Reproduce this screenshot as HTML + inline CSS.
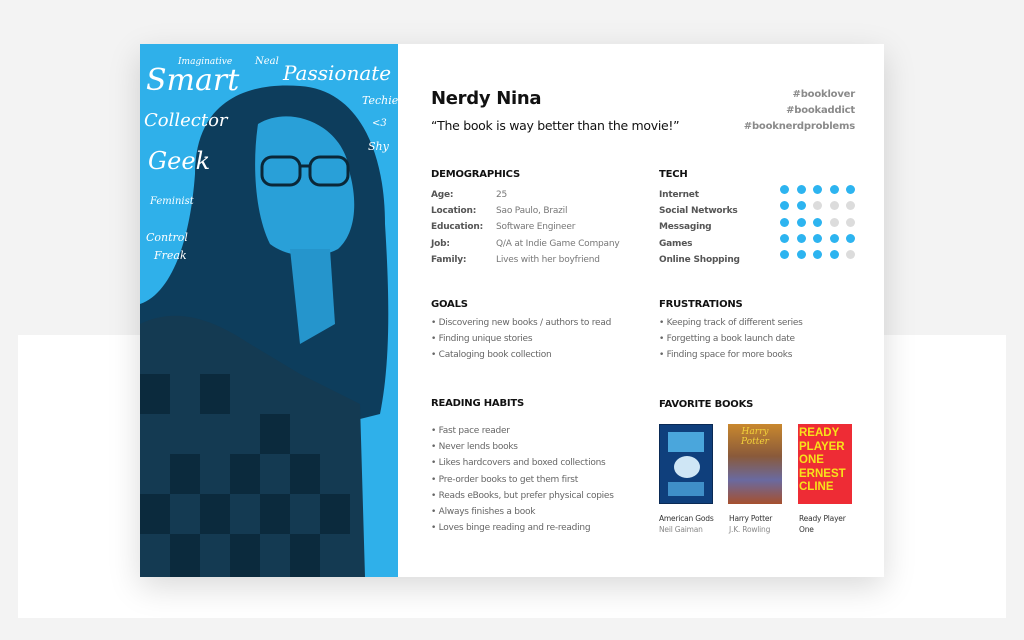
<!DOCTYPE html>
<html><head><meta charset="utf-8"><style>
*{margin:0;padding:0;box-sizing:border-box}
body{width:1024px;height:640px;background:#f3f3f3;position:relative;overflow:hidden;font-family:"DejaVu Sans","Liberation Sans",sans-serif;color:#222}
.band{position:absolute;left:18px;top:335px;width:988px;height:283px;background:#fff}
.card{position:absolute;left:140px;top:44px;width:744px;height:533px;background:#fff;box-shadow:0 10px 30px rgba(0,0,0,.15)}
.photo{position:absolute;left:0;top:0;width:258px;height:533px;background:#2fb0ea;overflow:hidden}
.a{position:absolute;white-space:nowrap}
h1{position:absolute;left:291px;top:44px;font-size:18px;font-weight:bold;color:#111;letter-spacing:-.3px}
.q{left:291px;top:74px;font-size:12.5px;color:#111;letter-spacing:-.3px}
.tags{position:absolute;right:29px;top:43px;text-align:right;font-size:10px;font-weight:bold;color:#8a8a8a;line-height:16px;letter-spacing:-.2px}
.h{font-size:10px;font-weight:bold;color:#111;letter-spacing:-.2px}
.k{font-size:9px;font-weight:bold;color:#555;letter-spacing:-.2px}
.v{font-size:9px;color:#777;letter-spacing:-.2px}
.li{font-size:9px;color:#666;line-height:16.2px;letter-spacing:-.25px}
.dot{position:absolute;width:9px;height:9px;border-radius:50%}
.b{background:#2db4f0}.g{background:#dcdcdc}
.bk{position:absolute;width:54px;height:80px;top:380px}
.cap{font-size:7.5px;color:#333;line-height:11px;letter-spacing:-.2px}
.cap span{color:#888}
</style></head><body>
<div class="band"></div>
<div class="card">
<div class="photo">
<svg width="258" height="533" viewBox="0 0 258 533">
<path d="M55 130 C55 55 110 38 160 42 C220 46 245 110 245 180 C250 260 250 320 240 370 L200 380 L150 330 L90 330 L0 300 L0 260 C30 250 50 200 55 130 Z" fill="#0d3d5c"/>
<path d="M0 280 C40 260 80 280 110 300 L160 330 L220 360 L225 533 L0 533 Z" fill="#143a52"/>
<g fill="#0a2738" opacity=".8">
<rect x="0" y="330" width="30" height="40"/><rect x="60" y="330" width="30" height="40"/><rect x="120" y="370" width="30" height="40"/>
<rect x="30" y="410" width="30" height="40"/><rect x="90" y="410" width="30" height="40"/><rect x="150" y="410" width="30" height="40"/>
<rect x="0" y="450" width="30" height="40"/><rect x="60" y="450" width="30" height="40"/><rect x="120" y="450" width="30" height="40"/><rect x="180" y="450" width="30" height="40"/>
<rect x="30" y="490" width="30" height="43"/><rect x="90" y="490" width="30" height="43"/><rect x="150" y="490" width="30" height="43"/>
</g>
<path d="M118 80 C150 60 205 80 210 130 C218 160 215 190 198 205 C180 215 150 215 130 200 C115 170 112 120 118 80 Z" fill="#29a0d8"/>
<path d="M150 205 L190 205 L195 280 L160 300 Z" fill="#2595cc"/>
<g fill="none" stroke="#0a2738" stroke-width="3"><rect x="122" y="113" width="38" height="28" rx="10"/><rect x="170" y="113" width="38" height="28" rx="10"/><path d="M160 122 L170 122"/></g>
<g fill="#fff" font-family="'DejaVu Serif',serif" font-style="italic">
<text x="6" y="46" font-size="30">Smart</text>
<text x="38" y="20" font-size="9">Imaginative</text>
<text x="115" y="20" font-size="10">Neal</text>
<text x="143" y="36" font-size="20">Passionate</text>
<text x="222" y="60" font-size="11">Techie</text>
<text x="232" y="82" font-size="10">&lt;3</text>
<text x="228" y="106" font-size="11">Shy</text>
<text x="4" y="82" font-size="18">Collector</text>
<text x="8" y="125" font-size="24">Geek</text>
<text x="10" y="160" font-size="10">Feminist</text>
<text x="6" y="197" font-size="11">Control</text>
<text x="14" y="215" font-size="11">Freak</text>
</g>
</svg>
</div>
<h1>Nerdy Nina</h1>
<div class="a q">“The book is way better than the movie!”</div>
<div class="tags">#booklover<br>#bookaddict<br>#booknerdproblems</div>

<div class="a h" style="left:291px;top:125px">DEMOGRAPHICS</div>
<div class="a k" style="left:291px;top:143px;line-height:16.2px">Age:<br>Location:<br>Education:<br>Job:<br>Family:</div>
<div class="a v" style="left:356px;top:143px;line-height:16.2px">25<br>Sao Paulo, Brazil<br>Software Engineer<br>Q/A at Indie Game Company<br>Lives with her boyfriend</div>

<div class="a h" style="left:519px;top:125px">TECH</div>
<div class="a k" style="left:519px;top:143px;line-height:16.2px">Internet<br>Social Networks<br>Messaging<br>Games<br>Online Shopping</div>
<div id="dots"></div>

<div class="a h" style="left:291px;top:255px">GOALS</div>
<div class="a li" style="left:291px;top:271px">• Discovering new books / authors to read<br>• Finding unique stories<br>• Cataloging book collection</div>
<div class="a h" style="left:519px;top:255px">FRUSTRATIONS</div>
<div class="a li" style="left:519px;top:271px">• Keeping track of different series<br>• Forgetting a book launch date<br>• Finding space for more books</div>

<div class="a h" style="left:291px;top:354px">READING HABITS</div>
<div class="a li" style="left:291px;top:379px">• Fast pace reader<br>• Never lends books<br>• Likes hardcovers and boxed collections<br>• Pre-order books to get them first<br>• Reads eBooks, but prefer physical copies<br>• Always finishes a book<br>• Loves binge reading and re-reading</div>
<div class="a h" style="left:519px;top:355px">FAVORITE BOOKS</div>

<div class="bk" style="left:519px;background:#0f3f7c;border:1px solid #0a2a55"><div style="margin:7px 8px 0;height:20px;background:#4aa6dc"></div><div style="margin:4px 14px;width:26px;height:22px;border-radius:50%;background:#cfe6f5"></div><div style="margin:2px 8px;height:14px;background:#3f8fc8"></div></div>
<div class="bk" style="left:588px;background:linear-gradient(#c9882e,#8a5a3a 40%,#6a6aa0 70%,#a6502e)"><div style="color:#f3d23b;font-size:9px;font-style:italic;text-align:center;margin-top:3px;font-family:'DejaVu Serif',serif">Harry Potter</div></div>
<div class="bk" style="left:658px;background:#ee2c35;color:#f7e21b;font-weight:bold;font-size:11.5px;line-height:13.5px;padding:3px 1px;font-family:'Liberation Sans',sans-serif;overflow:hidden">READY<br>PLAYER<br>ONE<br>ERNEST<br>CLINE</div>

<div class="a cap" style="left:519px;top:469px">American Gods<br><span>Neil Gaiman</span></div>
<div class="a cap" style="left:589px;top:469px">Harry Potter<br><span>J.K. Rowling</span></div>
<div class="a cap" style="left:659px;top:469px">Ready Player<br>One</div>
</div>
<script>
var d=[5,2,3,5,4],h='';
for(var r=0;r<5;r++)for(var c=0;c<5;c++)h+='<div class="dot '+(c<d[r]?'b':'g')+'" style="left:'+(640+c*16.5)+'px;top:'+(141+r*16.3)+'px"></div>';
document.getElementById('dots').innerHTML=h;
</script>
</body></html>
